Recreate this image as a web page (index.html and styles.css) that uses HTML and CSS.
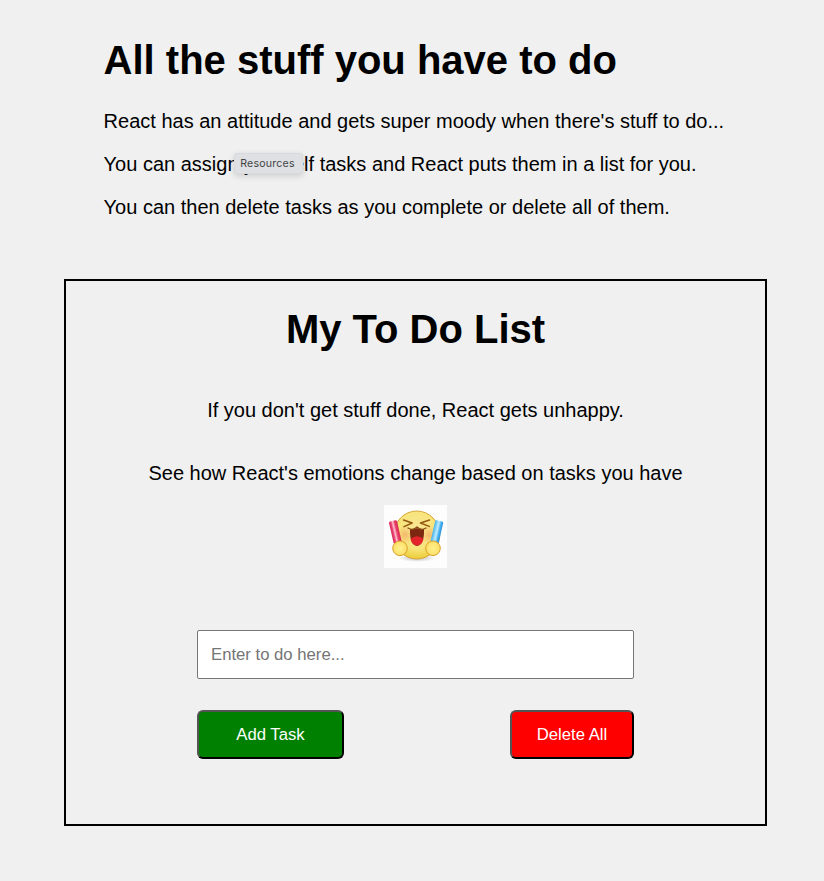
FILE: index.html
```html
<!DOCTYPE html>
<html lang="en">
<head>
<meta charset="utf-8">
<title>My To Do List</title>
<link rel="stylesheet" href="styles.css">
</head>
<body>
<header class="intro">
  <h1>All the stuff you have to do</h1>
  <p>React has an attitude and gets super moody when there's stuff to do...</p>
  <p>You can assign yourself tasks and React puts them in a list for you.</p>
  <p>You can then delete tasks as you complete or delete all of them.</p>
  <span class="tooltip">Resources</span>
</header>
<main class="todo">
  <h1>My To Do List</h1>
  <p class="first">If you don't get stuff done, React gets unhappy.</p>
  <p class="second">See how React's emotions change based on tasks you have</p>
  <svg class="face" viewBox="0 0 63 63">
    <defs>
      <radialGradient id="skin" cx=".5" cy=".4" r=".6"><stop offset="0" stop-color="#f8e598"/><stop offset=".65" stop-color="#f8e57c"/><stop offset="1" stop-color="#edcc38"/></radialGradient>
      <radialGradient id="hand"><stop offset="0" stop-color="#fff08c"/><stop offset="1" stop-color="#fbe068"/></radialGradient>
      <radialGradient id="blush"><stop offset="0" stop-color="#f3a262" stop-opacity=".7"/><stop offset="1" stop-color="#f3b862" stop-opacity="0"/></radialGradient>
      <radialGradient id="shade"><stop offset="0" stop-color="#bbb"/><stop offset="1" stop-color="#fff"/></radialGradient>
      <linearGradient id="red"><stop offset="0" stop-color="#d92858"/><stop offset=".25" stop-color="#e94572"/><stop offset=".45" stop-color="#ffc2d0"/><stop offset=".7" stop-color="#e83c68"/><stop offset="1" stop-color="#d92f55"/></linearGradient>
      <linearGradient id="blue"><stop offset="0" stop-color="#45b0ed"/><stop offset=".3" stop-color="#8ed8fc"/><stop offset=".5" stop-color="#c0eaff"/><stop offset=".75" stop-color="#48b3f0"/><stop offset="1" stop-color="#2c92dc"/></linearGradient>
    </defs>
    <rect width="63" height="63" fill="#fdfdfd"/>
    <ellipse cx="33" cy="53" rx="19" ry="4" fill="url(#shade)"/>
    <ellipse cx="32.8" cy="30" rx="23" ry="24" fill="url(#skin)" stroke="#d8a638" stroke-width="1"/>
    <ellipse cx="21" cy="30" rx="9" ry="10" fill="url(#blush)"/>
    <ellipse cx="45" cy="30" rx="9" ry="10" fill="url(#blush)"/>
    <path d="M19.500 15l8.700 3-8.200 3.600M45.500 15l-9 3 8.800 3.400" fill="none" stroke="#925711" stroke-width="1.500" stroke-linejoin="round" stroke-linecap="round"/>
    <path d="M26 24q4 1 7-1 3 2 7 1 .5 16-7 17-7.500-1-7-17z" fill="#7c2810"/>
    <path d="M26.500 34q6.500-5.500 13 0-1.500 6-6.500 6.500-5-.5-6.500-6.500z" fill="#e3252b"/>
    <path d="M24 23q5 3 9-1 4 4 9 1" fill="none" stroke="#85480e" stroke-width="1.200" stroke-linecap="round"/>
    <rect x="7.200" y="15.500" width="8.200" height="23" rx="1.500" fill="url(#red)" transform="rotate(-13 11.300 27)"/>
    <rect x="48.800" y="15.500" width="8.200" height="23" rx="1.500" fill="url(#blue)" transform="rotate(13 52.900 27)"/>
    <circle cx="16" cy="43.300" r="7.300" fill="url(#hand)" stroke="#dca02c"/>
    <circle cx="49" cy="43.300" r="7.300" fill="url(#hand)" stroke="#dca02c"/>
  </svg>
  <form class="form">
    <input type="text" placeholder="Enter to do here...">
    <div class="actions">
      <button type="button" class="add">Add Task</button>
      <button type="button" class="delete">Delete All</button>
    </div>
  </form>
</main>
</body>
</html>
```
FILE: styles.css
```css
* { box-sizing: border-box; }
body { margin: 0; background: #f0f0f0; color: #000; font: 20px/23px "Liberation Sans", Arial, sans-serif; }
h1 { margin: 0; font-size: 40px; line-height: 46px; }
.intro { position: relative; padding: 37px 0 0 103.6px; height: 279px; white-space: nowrap; }
.intro h1 { margin-bottom: 27px; }
.intro p { margin: 0 0 20px; }
.tooltip { position: absolute; left: 234px; top: 153px; width: 69px; height: 21px; padding-right: 2px; border: 1px solid #d8dade; border-radius: 3px; background: #dee0e4; color: #444; font: 10.6px/19px Inter, sans-serif; letter-spacing: .2px; text-align: center; box-shadow: 0 2px 6px rgba(0,0,0,.15); }
.todo { width: 703px; height: 547px; margin-left: 64px; padding-top: 25px; border: 2px solid #000; display: flex; flex-direction: column; align-items: center; }
.todo p { margin: 0; }
.todo .first { margin-top: 47px; }
.todo .second { margin-top: 40px; }
.face { width: 63px; height: 63px; margin-top: 20px; }
.form { width: 437px; margin-top: 62px; }
input { display: block; width: 100%; height: 49px; padding: 0 13px; border: 1px solid #767676; border-radius: 2px; background: #fff; font: 16.7px "Liberation Sans", Arial, sans-serif; }
input::placeholder { color: #757575; }
.actions { display: flex; justify-content: space-between; margin-top: 31px; }
button { height: 49px; padding: 0; border: 2px outset #000; border-radius: 6px; color: #fff; font: 16.7px "Liberation Sans", Arial, sans-serif; }
.add { width: 147px; background: #008000; }
.delete { width: 124px; background: #f00; }
```
